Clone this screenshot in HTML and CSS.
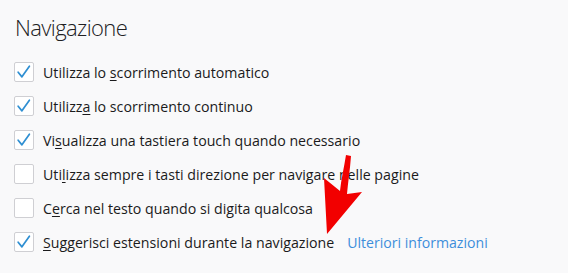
FILE: index.html
```html
<!DOCTYPE html>
<html lang="it">
<head>
<meta charset="utf-8">
<link rel="stylesheet" href="styles.css">
</head>
<body>
<main class="pane">
  <h1 class="title">Navigazione</h1>
  <ul class="options">
    <li class="option">
      <span class="box checked"><svg viewBox="0 0 20 20"><path d="M3.5 10.2 L7.7 15.4 L16 3.5"/></svg></span>
      <span class="label">Utilizza lo <u>s</u>corrimento automatico</span>
    </li>
    <li class="option">
      <span class="box checked"><svg viewBox="0 0 20 20"><path d="M3.5 10.2 L7.7 15.4 L16 3.5"/></svg></span>
      <span class="label">Utilizz<u>a</u> lo scorrimento continuo</span>
    </li>
    <li class="option">
      <span class="box checked"><svg viewBox="0 0 20 20"><path d="M3.5 10.2 L7.7 15.4 L16 3.5"/></svg></span>
      <span class="label">Vi<u>s</u>ualizza una tastiera touch quando necessario</span>
    </li>
    <li class="option">
      <span class="box"></span>
      <span class="label">Uti<u>l</u>izza sempre i tasti direzione per navigare nelle pagine</span>
    </li>
    <li class="option">
      <span class="box"></span>
      <span class="label">C<u>e</u>rca nel testo quando si digita qualcosa</span>
    </li>
    <li class="option">
      <span class="box checked"><svg viewBox="0 0 20 20"><path d="M3.5 10.2 L7.7 15.4 L16 3.5"/></svg></span>
      <span class="label"><u>S</u>uggerisci estensioni durante la navigazione</span>
      <a class="link" href="#">Ulteriori informazioni</a>
    </li>
  </ul>
  <svg class="arrow" viewBox="0 0 568 273" aria-hidden="true">
    <path d="M346 155 L351 156 C350 170 348 182 347 194 L362 192 L327 234 L324 178 L340 191 C341 180 344 168 346 155 Z"/>
  </svg>
</main>
</body>
</html>
```
FILE: styles.css
```css
html, body {
  margin: 0;
  padding: 0;
  background: #f9f9fa;
}
body {
  font-family: "Open Sans", "Noto Sans", sans-serif;
  color: #1b1b1c;
  width: 568px;
  height: 273px;
  overflow: hidden;
}
.pane {
  position: relative;
  padding: 12px 0 0 14px;
  height: 273px;
  box-sizing: border-box;
}
.title {
  margin: 0 0 0 1px;
  font-size: 22px;
  font-weight: 300;
  line-height: 30px;
  color: #202022;
  letter-spacing: -0.6px;
}
.options {
  list-style: none;
  margin: 20px 0 0 0;
  padding: 0;
  display: flex;
  flex-direction: column;
  gap: 14px;
}
.option {
  display: flex;
  align-items: center;
  height: 20px;
}
.box {
  width: 18px;
  height: 18px;
  border: 1px solid #cfcfd3;
  border-radius: 2px;
  background: #ffffff;
  flex: none;
  display: flex;
}
.box svg {
  width: 18px;
  height: 18px;
}
.box svg path {
  fill: none;
  stroke: #2f8fd2;
  stroke-width: 1.9;
  stroke-linecap: round;
  stroke-linejoin: round;
}
.label {
  margin-left: 9px;
  font-size: 14.2px;
  white-space: nowrap;
}
.label u {
  text-decoration-thickness: 1px;
  text-underline-offset: 2px;
}
.link {
  margin-left: 13px;
  font-size: 14.1px;
  color: #3d8edb;
  text-decoration: none;
  white-space: nowrap;
}
.arrow {
  position: absolute;
  left: 0;
  top: 0;
  width: 568px;
  height: 273px;
  pointer-events: none;
}
.arrow path {
  fill: #f20000;
}
```
